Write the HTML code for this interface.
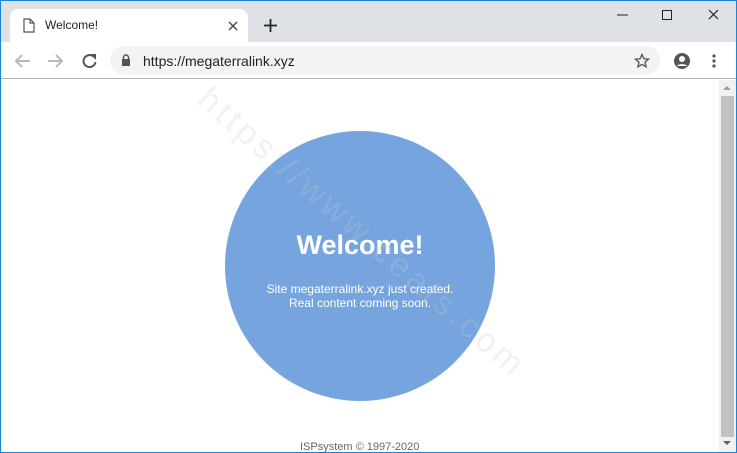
<!DOCTYPE html>
<html><head><style>
*{margin:0;padding:0;box-sizing:border-box}
body{width:737px;height:453px;overflow:hidden;font-family:"Liberation Sans",Arial,sans-serif;background:#fff;position:relative}
.frame{position:absolute;inset:0;border:1px solid #1883d7;border-bottom:none}
.title{position:absolute;left:1px;top:1px;right:1px;height:41px;background:#dee1e6}
.tab{position:absolute;left:10px;top:9px;width:238px;height:34px;background:#fff;border-radius:8px 8px 0 0}
.toolbar{position:absolute;left:1px;right:1px;top:42px;height:37px;background:#fff;border-bottom:1px solid #b8b8b8}
.addr{position:absolute;left:110px;top:46px;width:550px;height:29px;background:#f1f3f4;border-radius:15px}
.scroll{position:absolute;left:719px;top:80px;width:17px;height:373px;background:#f1f1f1}
.thumb{position:absolute;left:721px;top:96px;width:13px;height:341px;background:#c1c1c1}
.circle{position:absolute;left:225px;top:131px;width:270px;height:270px;border-radius:50%;background:#76a4df;color:#fff;text-align:center}
.wm{position:absolute;left:203px;top:76px;font-size:34px;line-height:36px;color:rgba(200,200,200,.25);transform:rotate(41deg);transform-origin:left center;white-space:nowrap;letter-spacing:4px}
</style></head><body>
<div class="frame"></div>
<div class="title"></div>
<div class="tab"></div>
<svg style="position:absolute;left:23px;top:18px" width="12" height="15"><path d="M1 1h6l4 4v9H1z M7 1v4h4" fill="none" stroke="#555" stroke-width="1.2"/></svg>
<div style="position:absolute;left:45px;top:18px;font-size:12px;color:#222">Welcome!</div>
<svg style="position:absolute;left:228px;top:21px" width="10" height="10"><path d="M1 1l8 8M9 1l-8 8" stroke="#444" stroke-width="1.4"/></svg>
<svg style="position:absolute;left:264px;top:19px" width="13" height="13"><path d="M6.5 0v13M0 6.5h13" stroke="#222" stroke-width="1.8"/></svg>
<svg style="position:absolute;left:616px;top:8px" width="110" height="14"><path d="M1 7h11" stroke="#222"/><rect x="46.5" y="2.5" width="9" height="9" fill="none" stroke="#222"/><path d="M93 2l9 9M102 2l-9 9" stroke="#222" stroke-width="1.2"/></svg>
<div class="toolbar"></div>
<div class="addr"></div>
<svg style="position:absolute;left:14px;top:53px" width="90" height="16"><path d="M16 8H3M8 2L2 8l6 6" fill="none" stroke="#bbb" stroke-width="2"/><path d="M34 8h13M42 2l6 6-6 6" fill="none" stroke="#bbb" stroke-width="2"/><path d="M80 4a6 6 0 1 0 1.5 5" fill="none" stroke="#555" stroke-width="2"/><path d="M76 1h6v6z" fill="#555"/></svg>
<svg style="position:absolute;left:121px;top:54px" width="10" height="13"><rect x="1" y="5" width="8" height="7" fill="#555"/><path d="M2.5 5V3.5a2.5 2.5 0 0 1 5 0V5" fill="none" stroke="#555" stroke-width="1.5"/></svg>
<div style="position:absolute;left:143px;top:53px;font-size:14px;color:#222">https://megaterralink.xyz</div>
<svg style="position:absolute;left:634px;top:53px" width="16" height="16"><path d="M8 1.5l1.9 4.3 4.6.4-3.5 3 1.1 4.6L8 11.4 3.9 13.8 5 9.2 1.5 6.2l4.6-.4z" fill="none" stroke="#555" stroke-width="1.3"/></svg>
<svg style="position:absolute;left:673px;top:52px" width="18" height="18"><circle cx="9" cy="9" r="8" fill="#555"/><circle cx="9" cy="7" r="3" fill="#fff"/><path d="M3.5 14a6.5 4 0 0 1 11 0" fill="#fff"/></svg>
<svg style="position:absolute;left:712px;top:54px" width="4" height="14"><circle cx="2" cy="2" r="1.6" fill="#555"/><circle cx="2" cy="7" r="1.6" fill="#555"/><circle cx="2" cy="12" r="1.6" fill="#555"/></svg>
<div class="scroll"></div><div class="thumb"></div>
<svg style="position:absolute;left:723px;top:85px" width="9" height="6"><path d="M0 5h8L4 1z" fill="#a0a0a0"/></svg>
<svg style="position:absolute;left:723px;top:440px" width="9" height="6"><path d="M0 1h8L4 5z" fill="#606060"/></svg>
<div class="circle">
<div style="font-size:27px;font-weight:bold;margin-top:99px">Welcome!</div>
<div style="font-size:12px;margin-top:21px;line-height:14px">Site megaterralink.xyz just created.<br>Real content coming soon.</div>
</div>
<div class="wm">https://www.ceats.com</div>
<div style="position:absolute;left:300px;top:441px;font-size:11px;color:#667">ISPsystem © 1997-2020</div>
<div style="position:absolute;left:0;right:0;bottom:0;height:1px;background:#1883d7"></div>
</body></html>
